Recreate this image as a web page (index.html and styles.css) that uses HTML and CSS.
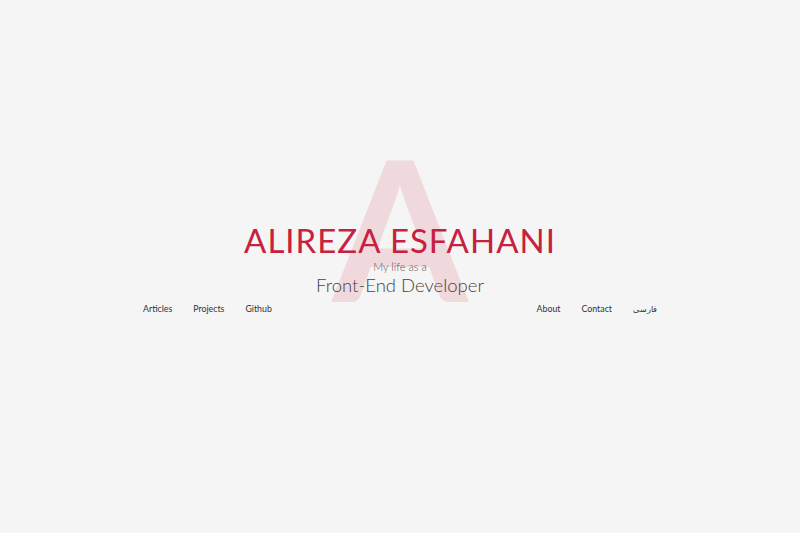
FILE: index.html
```html
<!DOCTYPE html>
<html lang="en">
<head>
<meta charset="utf-8">
<title>Alireza Esfahani</title>
<link rel="stylesheet" href="styles.css">
</head>
<body>
<div class="page">
  <header class="hero">
    <div class="mark" aria-hidden="true">A</div>
    <h1 class="title">ALIREZA ESFAHANI</h1>
    <p class="sub">My life as a</p>
    <p class="role">Front-End Developer</p>
    <nav class="nav">
      <div class="group">
        <a href="#">Articles</a>
        <a href="#">Projects</a>
        <a href="#">Github</a>
      </div>
      <div class="group">
        <a href="#">About</a>
        <a href="#">Contact</a>
        <a href="#" class="fa" lang="fa">فارسی</a>
      </div>
    </nav>
  </header>
</div>
</body>
</html>
```
FILE: styles.css
```css
html, body {
  margin: 0;
  padding: 0;
  background: #f5f5f5;
}
body {
  font-family: Lato, "Noto Sans", sans-serif;
  color: #333;
}
.page {
  padding-top: 222px;
}
.hero {
  position: relative;
  width: 514px;
  margin: 0 auto;
  display: flex;
  flex-direction: column;
  align-items: center;
}
.mark {
  position: absolute;
  left: 50%;
  top: -92px;
  transform: translateX(-50%);
  font-family: Lato, sans-serif;
  font-weight: 700;
  font-size: 195px;
  line-height: 195px;
  color: #f0d9dc;
  z-index: 0;
}
.title, .sub, .role, .nav {
  position: relative;
  z-index: 1;
}
.title {
  margin: 0;
  font-weight: 400;
  font-size: 33px;
  line-height: 36px;
  letter-spacing: 1px;
  color: #c8203f;
}
.sub {
  margin: 2px 0 0;
  font-size: 11px;
  line-height: 14px;
  color: #555;
  font-weight: 300;
}
.role {
  margin: 0;
  font-size: 18.5px;
  line-height: 22px;
  color: #444;
  font-weight: 300;
}
.nav {
  align-self: stretch;
  display: flex;
  justify-content: space-between;
  margin-top: 7px;
}
.group {
  display: flex;
  align-items: center;
  gap: 21px;
}
.nav a {
  font-size: 8.8px;
  line-height: 12px;
  color: #2f3431;
  text-decoration: none;
  font-weight: 400;
}
.nav a.fa {
  font-size: 7.6px;
}
```
